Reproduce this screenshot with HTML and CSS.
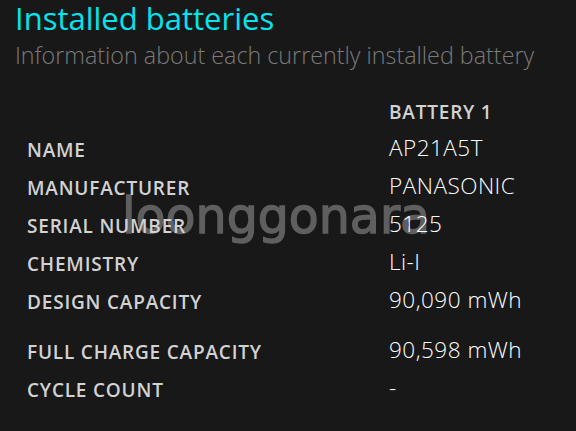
FILE: index.html
```html
<!DOCTYPE html>
<html lang="en">

<head>
    <meta charset="UTF-8">
    <title>Battery report</title>
    <link rel="stylesheet" href="styles.css">
</head>

<body>
    <section class="batteries">
        <h1>Installed batteries</h1>
        <p class="subtitle">Information about each currently installed battery</p>

        <div class="info-table">
            <div class="head"></div>
            <div class="head">Battery 1</div>

            <div class="label">Name</div>
            <div class="value">AP21A5T</div>

            <div class="label">Manufacturer</div>
            <div class="value">PANASONIC</div>

            <div class="label">Serial number</div>
            <div class="value">5125</div>

            <div class="label">Chemistry</div>
            <div class="value">Li-I</div>

            <div class="label">Design capacity</div>
            <div class="value">90,090 mWh</div>

            <div class="label gap">Full charge capacity</div>
            <div class="value gap">90,598 mWh</div>

            <div class="label">Cycle count</div>
            <div class="value">-</div>
        </div>

        <div class="watermark">loonggonara</div>
    </section>
</body>

</html>
```

FILE: styles.css
```css
body {
    margin: 0;
    background-color: #181818;
    color: #fff;
    font-family: 'Open Sans', 'Noto Sans', sans-serif;
    overflow: hidden;
}

.batteries {
    position: relative;
    height: 431px;
    padding: 0 0 0 15px;
}

.batteries h1 {
    margin: 0;
    font-size: 31px;
    font-weight: 400;
    line-height: 36px;
    color: #00e5ee;
}

.subtitle {
    margin: 3px 0 0;
    font-size: 23.3px;
    font-weight: 300;
    line-height: 32px;
    color: #7a7a7a;
}

.info-table {
    position: relative;
    z-index: 1;
    display: grid;
    grid-template-columns: 362px 1fr;
    grid-auto-rows: minmax(38px, auto);
    align-items: end;
    margin-top: 15px;
    padding-left: 12px;
}

.head,
.label {
    font-size: 19px;
    font-weight: 600;
    letter-spacing: 0.8px;
    text-transform: uppercase;
    color: #d2d2d2;
    line-height: 24px;
}

.value {
    font-size: 22.5px;
    font-weight: 300;
    letter-spacing: 0.5px;
    color: #fff;
    line-height: 28px;
}

.gap {
    padding-top: 26px;
}

.value.gap {
    padding-top: 22px;
}

.watermark {
    position: absolute;
    top: 192px;
    left: 122px;
    z-index: 0;
    font-family: 'DejaVu Sans', sans-serif;
    font-size: 49px;
    line-height: 49px;
    color: #5f5f5f;
    -webkit-text-stroke: 1.4px #5f5f5f;
}
```
